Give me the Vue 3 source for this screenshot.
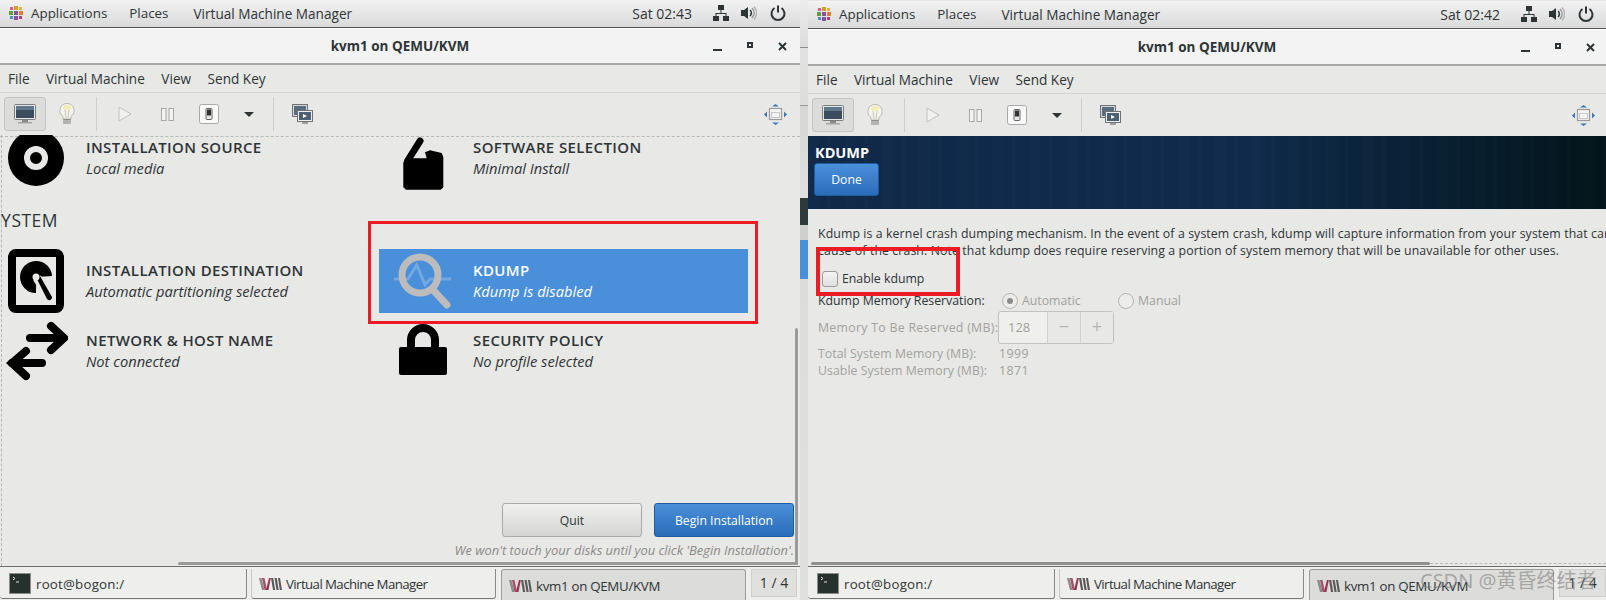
<script setup>
const screens = [
  { id: 'left', time: 'Sat 02:43', hub: true },
  { id: 'right', time: 'Sat 02:42', hub: false }
]
const menus = ['File', 'Virtual Machine', 'View', 'Send Key']
const leftSpokes = [
  { title: 'INSTALLATION DESTINATION', sub: 'Automatic partitioning selected' },
  { title: 'NETWORK & HOST NAME', sub: 'Not connected' }
]
</script>

<template>
  <div class="page">
    <template v-for="(s, i) in screens" :key="s.id">
      <div v-if="i === 1" class="gutter"></div>
      <section class="screen" :class="s.id">
        <header class="topbar">
          <svg class="logo" width="14" height="14" viewBox="0 0 14 14">
            <rect x="5" y="0" width="4" height="4" fill="#c9a227" />
            <rect x="0" y="5" width="4" height="4" fill="#5f9f3a" />
            <rect x="5" y="5" width="4" height="4" fill="#8a4f9e" />
            <rect x="10" y="5" width="4" height="4" fill="#d9822b" />
            <rect x="5" y="10" width="4" height="4" fill="#8a4f9e" />
            <rect x="1" y="1" width="3" height="3" fill="#d95b9a" />
            <rect x="10" y="1" width="3" height="3" fill="#e3b341" />
            <rect x="1" y="10" width="3" height="3" fill="#4d8fc4" />
            <rect x="10" y="10" width="3" height="3" fill="#b0417f" />
          </svg>
          <span class="app-menu applications">Applications</span>
          <span class="app-menu places">Places</span>
          <span class="app-menu vmm">Virtual Machine Manager</span>
          <span class="clock">{{ s.time }}</span>
          <svg class="tray net" width="16" height="16" viewBox="0 0 16 16" fill="#2e3436">
            <rect x="5" y="0" width="6" height="5" />
            <rect x="0" y="11" width="6" height="5" />
            <rect x="10" y="11" width="6" height="5" />
            <path d="M7.5 5h1v3H13.5v3h-1V9h-9v2h-1V8h5z" />
          </svg>
          <svg class="tray vol" width="16" height="16" viewBox="0 0 16 16">
            <path d="M0 5h3l4-3v12l-4-3H0z" fill="#2e3436" />
            <path d="M9 5a4 4 0 0 1 0 6" stroke="#2e3436" stroke-width="1.5" fill="none" />
            <path d="M11 3a7 7 0 0 1 0 10" stroke="#9a9a9a" stroke-width="1.5" fill="none" />
            <path d="M13 1.5a9.500 9.500 0 0 1 0 13" stroke="#b5b5b5" stroke-width="1.4" fill="none" />
          </svg>
          <svg class="tray power" width="16" height="16" viewBox="0 0 16 16" fill="none" stroke="#2e3436" stroke-width="2">
            <path d="M8 0.500v7" />
            <path d="M4.500 3a6.500 6.500 0 1 0 7 0" />
          </svg>
        </header>

        <div class="titlebar">
          <span class="wintitle">kvm1 on QEMU/KVM</span>
          <span class="winctl min"></span>
          <span class="winctl max"></span>
          <svg class="winctl close" width="9" height="9" viewBox="0 0 9 9" stroke="#2e3436" stroke-width="2">
            <path d="M1 1l7 7M8 1l-7 7" />
          </svg>
        </div>

        <nav class="menubar">
          <span v-for="m in menus" :key="m" class="menuitem">{{ m }}</span>
        </nav>

        <div class="toolbar">
          <button class="tool active">
            <svg width="22" height="20" viewBox="0 0 22 20">
              <rect x="0.500" y="0.500" width="21" height="15" rx="1" fill="#e4e6e8" stroke="#7c7f80" />
              <rect x="2" y="2" width="18" height="12" fill="#3a4c5e" />
              <path d="M2 2h18v4H2z" fill="#63778a" />
              <rect x="8" y="16" width="6" height="2" fill="#888" />
              <rect x="4" y="18" width="14" height="1.500" fill="#a5a5a5" />
            </svg>
          </button>
          <button class="tool">
            <svg width="16" height="22" viewBox="0 0 16 22">
              <path d="M8 .5a7 7 0 0 0-4 12.800V16h8v-2.700A7 7 0 0 0 8 .5z" fill="#f4f4ee" stroke="#b8b8b0" />
              <ellipse cx="8" cy="4.500" rx="4" ry="2.500" fill="#eeeeb0" />
              <path d="M6 7l1 8M10 7l-1 8" stroke="#c4c4bc" fill="none" />
              <rect x="4" y="16" width="8" height="5" rx="1" fill="#8e8e8e" />
              <path d="M4 18h8M4 20h8" stroke="#d8d8d8" />
            </svg>
          </button>
          <span class="sep"></span>
          <button class="tool">
            <svg width="14" height="16" viewBox="0 0 14 16"><path d="M1 1l12 7-12 7z" fill="#f0f0ee" stroke="#c2c2c0" /></svg>
          </button>
          <button class="tool">
            <svg width="13" height="13" viewBox="0 0 13 13">
              <rect x=".5" y=".5" width="4.500" height="12" fill="#f2f2f0" stroke="#a8a8a6" />
              <rect x="8" y=".5" width="4.500" height="12" fill="#f2f2f0" stroke="#a8a8a6" />
            </svg>
          </button>
          <button class="tool">
            <svg width="20" height="20" viewBox="0 0 20 20">
              <rect x=".5" y=".5" width="19" height="19" rx="2" fill="#fafafa" stroke="#a9a9a9" />
              <rect x="7" y="4.500" width="6" height="11" rx="1" fill="#e8e8e8" stroke="#666" />
              <rect x="8" y="5.500" width="4" height="6" fill="#333" />
            </svg>
          </button>
          <button class="tool caret"><span class="caret-shape"></span></button>
          <span class="sep sep2"></span>
          <button class="tool">
            <svg width="21" height="21" viewBox="0 0 21 21">
              <rect x=".5" y=".5" width="15" height="12" fill="#d8dadc" stroke="#6f7275" />
              <rect x="2" y="2" width="12" height="9" fill="#596b7d" />
              <rect x="5.500" y="6.500" width="15" height="11" fill="#eceef0" stroke="#6f7275" />
              <rect x="7" y="8" width="12" height="8" fill="#4d6073" />
              <path d="M11 10l4 2-4 2z" fill="#fff" />
              <rect x="10" y="18" width="6" height="2" fill="#a0a0a0" />
            </svg>
          </button>
          <button class="tool fit">
            <svg width="23" height="21" viewBox="0 0 23 21">
              <g fill="#3f74b5">
                <path d="M11.500 0l3.500 2.500h-7z" />
                <path d="M11.500 21l3.500-2.500h-7z" />
                <path d="M0 10.500l3-3v6z" />
                <path d="M23 10.500l-3-3v6z" />
              </g>
              <rect x="5.500" y="4.500" width="12" height="11" fill="#f4f4f4" stroke="#9a9a9a" stroke-width="1.200" />
              <rect x="7.500" y="8.500" width="8" height="5" fill="none" stroke="#c8c8c8" />
            </svg>
          </button>
        </div>

        <main v-if="s.hub" class="hub">
          <div class="spokes">
            <div class="col">
              <div class="spoke first">
                <span class="sp-icon">
                  <svg width="64" height="64" viewBox="0 0 64 64">
                    <circle cx="32" cy="32" r="28" fill="#000" />
                    <circle cx="32" cy="32" r="9" fill="none" stroke="#e8e8e6" stroke-width="6" />
                  </svg>
                </span>
                <div class="sp-text"><div class="sp-title">INSTALLATION SOURCE</div><div class="sp-sub">Local media</div></div>
              </div>
              <h2 class="category">SYSTEM</h2>
              <div v-for="(sp, n) in leftSpokes" :key="sp.title" class="spoke" :class="{ lower: n === 1 }">
                <span class="sp-icon">
                  <svg v-if="n === 0" width="64" height="64" viewBox="0 0 64 64">
                    <rect x="8" y="4" width="48" height="56" rx="4" fill="none" stroke="#000" stroke-width="8" />
                    <path d="M32 28L48 27A16 16 0 1 0 32 44Z" fill="#000" />
                    <path d="M33 29L47 50" stroke="#e8e8e6" stroke-width="9" />
                    <path d="M32 28L36 27 48 48A2.800 2.800 0 0 1 43 50Z" fill="#000" />
                    <circle cx="32" cy="28" r="3.500" fill="#e8e8e6" />
                  </svg>
                  <svg v-else width="64" height="64" viewBox="0 0 64 64" fill="none" stroke="#000" stroke-width="8">
                    <path d="M26 19H58" stroke-linecap="round" />
                    <path d="M47 7L60 19 47 31" stroke-linecap="round" />
                    <path d="M38 44H8" stroke-linecap="round" />
                    <path d="M22 32L8 44 22 57" stroke-linecap="round" />
                  </svg>
                </span>
                <div class="sp-text"><div class="sp-title">{{ sp.title }}</div><div class="sp-sub">{{ sp.sub }}</div></div>
              </div>
            </div>
            <div class="col col2">
              <div class="spoke first">
                <span class="sp-icon">
                  <svg width="64" height="66" viewBox="0 0 64 66">
                    <path d="M15.300 37.300L23.700 33.300H38.700L37 27.300L42 25.300L53.700 28L55.300 32.300V62.300L52.700 64.700H18L15.300 62.300Z" fill="#000" />
                    <path d="M32 16L19.500 36" stroke="#000" stroke-width="7" stroke-linecap="round" />
                  </svg>
                </span>
                <div class="sp-text"><div class="sp-title">SOFTWARE SELECTION</div><div class="sp-sub">Minimal Install</div></div>
              </div>
              <div class="cat-space"></div>
              <div class="spoke selected">
                <span class="sp-icon">
                  <svg width="64" height="64" viewBox="0 0 64 64" fill="none">
                    <path d="M6 30H20L28.700 16 37 35.700 42 30H63" stroke="#73a8e3" stroke-width="3" />
                    <circle cx="32" cy="26" r="18" stroke="#bcbcbc" stroke-width="7" />
                    <path d="M46 42L59 56" stroke="#bcbcbc" stroke-width="7" stroke-linecap="round" />
                  </svg>
                </span>
                <div class="sp-text"><div class="sp-title">KDUMP</div><div class="sp-sub">Kdump is disabled</div></div>
              </div>
              <div class="spoke lower">
                <span class="sp-icon">
                  <svg width="64" height="64" viewBox="0 0 64 64">
                    <path d="M23 30V21a12 12 0 0 1 24 0V30" fill="none" stroke="#000" stroke-width="8" />
                    <rect x="11" y="28" width="48" height="28" rx="2" fill="#000" />
                  </svg>
                </span>
                <div class="sp-text"><div class="sp-title">SECURITY POLICY</div><div class="sp-sub">No profile selected</div></div>
              </div>
            </div>
          </div>
          <div class="actions">
            <button class="btn quit">Quit</button>
            <button class="btn primary begin">Begin Installation</button>
          </div>
          <p class="note">We won't touch your disks until you click 'Begin Installation'.</p>
          <span class="vscroll"></span>
          <span class="hscroll"></span>
        </main>

        <main v-else class="kdump">
          <div class="banner">
            <div class="banner-title">KDUMP</div>
            <button class="btn primary done">Done</button>
          </div>
          <div class="form">
            <p class="line">Kdump is a kernel crash dumping mechanism. In the event of a system crash, kdump will capture information from your system that can</p>
            <p class="line">cause of the crash. Note that kdump does require reserving a portion of system memory that will be unavailable for other uses.</p>
            <label class="check-row"><span class="checkbox"></span>Enable kdump</label>
            <div class="res-row">
              <span class="res-label">Kdump Memory Reservation:</span>
              <span class="radio-opt"><span class="radio on"></span>Automatic</span>
              <span class="radio-opt"><span class="radio"></span>Manual</span>
            </div>
            <div class="spin-row">
              <span class="spin-label">Memory To Be Reserved (MB):</span>
              <div class="spin">
                <span class="spin-val">128</span>
                <span class="spin-btn">−</span>
                <span class="spin-btn">+</span>
              </div>
            </div>
            <div class="stat"><span class="stat-label">Total System Memory (MB):</span><span class="stat-val">1999</span></div>
            <div class="stat"><span class="stat-label">Usable System Memory (MB):</span><span class="stat-val">1871</span></div>
          </div>
          <span class="hscroll2"></span>
        </main>

        <footer class="taskbar">
          <div class="task t1">
            <svg width="22" height="21" viewBox="0 0 22 21">
              <rect x=".5" y=".5" width="21" height="20" fill="#26302c" stroke="#8b8b8b" />
              <path d="M4 4l2 1.500L4 7" stroke="#dfe6e0" fill="none" />
              <path d="M7 9h3" stroke="#dfe6e0" />
            </svg>
            root@bogon:/
          </div>
          <div class="task t2">
            <svg class="vm" width="23" height="12" viewBox="0 0 23 12">
              <path d="M0 0h2.500l3 12H3z" fill="#8a8a8a" />
              <path d="M3 0h2.500l2.500 12H5.500z" fill="#a8506a" />
              <path d="M7 12l3-12h1.800l-2.300 12z" fill="#943350" />
              <path d="M12 0h2.200l2 12H14zM15.500 0h2.200l2 12H17.500zM19 0h2l2 12h-2.200z" fill="#5a5a5a" />
            </svg>
            Virtual Machine Manager
          </div>
          <div class="task t3 active-task">
            <svg class="vm" width="23" height="12" viewBox="0 0 23 12">
              <path d="M0 0h2.500l3 12H3z" fill="#8a8a8a" />
              <path d="M3 0h2.500l2.500 12H5.500z" fill="#a8506a" />
              <path d="M7 12l3-12h1.800l-2.300 12z" fill="#943350" />
              <path d="M12 0h2.200l2 12H14zM15.500 0h2.200l2 12H17.500zM19 0h2l2 12h-2.200z" fill="#5a5a5a" />
            </svg>
            kvm1 on QEMU/KVM
          </div>
          <div class="pager">1 / 4</div>
        </footer>

        <span class="redbox"></span>
      </section>
    </template>
    <span class="watermark">CSDN @黄昏终结者</span>
  </div>
</template>

<style scoped>
.page {
  position: relative;
  display: flex;
  width: 1606px;
  height: 600px;
  overflow: hidden;
  font-family: "Open Sans", "Noto Sans", sans-serif;
  color: #2e3436;
  background: #e8e8e6;
}
.screen {
  position: relative;
  display: flex;
  flex-direction: column;
  flex: none;
  height: 600px;
  background: #e8e8e6;
}
.screen.left { width: 800px; }
.screen.right { width: 798px; padding-top: 1px; box-sizing: border-box; }
.gutter {
  flex: none;
  width: 8px;
  background: linear-gradient(180deg,
    #ececec 0, #dcdcdc 47px, #8d8d8d 47px, #8d8d8d 48px,
    #e2e2e2 48px, #dcdcdc 105px, #999 105px, #999 106px,
    #d6d6d6 106px, #e0e0e0 198px, #2c3a3a 198px, #2c3a3a 225px,
    #cfcfcf 225px, #cfcfcf 240px, #4a8fd9 240px, #4a8fd9 279px,
    #dcdcdc 279px, #e0e0e0 600px);
}
.topbar {
  display: flex;
  align-items: center;
  flex: none;
  height: 28px;
  box-sizing: border-box;
  padding: 0 14px 1px 9px;
  border-bottom: 1px solid #555;
  background: linear-gradient(180deg, #f2f2f2, #dadada);
  font-size: 13.4px;
}
.right .topbar { padding-right: 12px; }
.logo { margin-right: 8px; }
.app-menu { color: #2e3436; }
.applications { margin-right: 22px; }
.places { margin-right: 25px; }
.vmm { font-size: 13.6px; }
.clock { margin-left: auto; margin-right: 21px; font-size: 14px; }
.tray { margin-left: 0; }
.tray.vol { margin-left: 12px; }
.tray.power { margin-left: 13px; }

.titlebar {
  position: relative;
  display: flex;
  align-items: center;
  justify-content: center;
  flex: none;
  height: 37px;
  box-sizing: border-box;
  border-top: 1px solid #fff;
  border-bottom: 2px solid #a8a8a8;
  background: #f3f3f3;
}
.wintitle { font-size: 13.5px; font-weight: 700; color: #2e3436; }
.winctl { position: absolute; }
.min { right: 78px; top: 20px; width: 9px; height: 2px; background: #2e3436; }
.max { right: 47px; top: 13px; width: 2px; height: 2px; border: 2px solid #2e3436; }
.close { right: 13px; top: 13px; }
.right .min { right: 76px; }
.right .max { right: 45px; }
.right .close { right: 11px; }

.menubar {
  display: flex;
  align-items: center;
  gap: 16.500px;
  flex: none;
  height: 28px;
  box-sizing: border-box;
  padding: 0 8px;
  border-bottom: 1px solid #d4d4d2;
  font-size: 13.600px;
}
.toolbar {
  display: flex;
  align-items: center;
  flex: none;
  height: 42px;
  box-sizing: border-box;
  padding: 0 4px;
  background: #e8e8e6;
}
.right .toolbar { padding-right: 2px; }
.tool {
  display: flex;
  align-items: center;
  justify-content: center;
  width: 42px;
  height: 34px;
  padding: 0;
  border: 1px solid transparent;
  border-radius: 3px;
  background: none;
}
.tool.active { border-color: #c4c4c2; background: #dcdcda; }
.tool.caret { width: 38px; }
.caret-shape {
  width: 0;
  height: 0;
  border-left: 5px solid transparent;
  border-right: 5px solid transparent;
  border-top: 5px solid #2e3436;
}
.tool.fit { margin-left: auto; }
.sep { width: 1px; height: 34px; margin: 0 7px 0 8px; background: #d0d0ce; }
.sep2 { margin: 0 7px 0 5px; }

.hub {
  position: relative;
  display: flex;
  flex-direction: column;
  flex: 1;
  min-height: 0;
  overflow: hidden;
}
.hub::before {
  content: "";
  position: absolute;
  left: 0;
  right: 0;
  top: 1px;
  border-top: 1px dashed #b9b9b7;
}
.hub::after {
  content: "";
  position: absolute;
  left: 1px;
  top: 0;
  bottom: 0;
  border-left: 1px dashed #b9b9b7;
}
.spokes {
  position: relative;
  z-index: 1;
  display: flex;
  margin-top: -9px;
}
.col { display: flex; flex-direction: column; flex: none; width: 379px; }
.col2 { width: 369px; }
.spoke { display: flex; align-items: center; height: 64px; }
.spoke.lower { margin-top: 6px; }
.sp-icon { display: flex; flex: none; width: 86px; padding-left: 4px; box-sizing: border-box; }
.col2 .sp-icon { width: 94px; padding-left: 9px; }
.sp-title { font-size: 15px; font-weight: 600; letter-spacing: .38px; line-height: 20px; color: #2e3436; white-space: nowrap; }
.sp-sub { font-size: 14.700px; font-style: italic; line-height: 22px; color: #2e3436; white-space: nowrap; }
.category {
  height: 59px;
  margin: 0 0 0 -9px;
  font-size: 17.500px;
  font-weight: 400;
  line-height: 61px;
  letter-spacing: .5px;
}
.cat-space { height: 59px; }
.selected { background: #4a8fd9; color: #fff; }
.selected .sp-title, .selected .sp-sub { color: #fff; }

.actions {
  position: relative;
  z-index: 1;
  display: flex;
  justify-content: flex-end;
  gap: 12px;
  margin-top: auto;
  padding-right: 6px;
}
.btn {
  font-family: inherit;
  font-size: 12.200px;
  border-radius: 3px;
  padding: 0;
}
.quit {
  width: 140px;
  height: 34px;
  border: 1px solid #a9a9a7;
  background: linear-gradient(180deg, #f0f0ee, #d4d4d2);
  color: #2e3436;
}
.primary {
  border: 1px solid #1d5a9e;
  background: linear-gradient(180deg, #4a90d9, #2a6cb8);
  color: #fff;
}
.begin { width: 140px; height: 34px; }
.note {
  position: relative;
  z-index: 1;
  height: 17px;
  margin: 5px 6px 7px 0;
  font-size: 12.900px;
  font-style: italic;
  line-height: 17px;
  text-align: right;
  white-space: nowrap;
  color: #8b8b89;
}
.vscroll {
  position: absolute;
  z-index: 2;
  right: 2px;
  top: 193px;
  bottom: 1px;
  width: 3px;
  border-radius: 2px;
  background: #9a9c9c;
}
.hscroll {
  position: absolute;
  z-index: 2;
  left: 178px;
  right: 2px;
  bottom: 1px;
  height: 3px;
  border-radius: 2px;
  background: #9a9c9c;
}

.kdump {
  position: relative;
  display: flex;
  flex-direction: column;
  flex: 1;
  min-height: 0;
}
.banner {
  flex: none;
  height: 73px;
  box-sizing: border-box;
  padding: 8px 6px 0;
  background:
    repeating-linear-gradient(90deg, rgba(255,255,255,.006) 0 11px, rgba(0,0,0,.012) 11px 19px, rgba(255,255,255,.01) 19px 23px, rgba(0,0,0,.008) 23px 37px),
    linear-gradient(90deg, #10294a 0, #0f2a4c 55%, #082033 78%, #03141a 100%);
  color: #fff;
}
.banner-title { height: 18px; margin-left: 1px; font-size: 14.500px; font-weight: 700; line-height: 18px; }
.done { display: block; width: 65px; height: 33px; margin-top: 1px; }
.form { padding: 16px 0 0 10px; font-size: 12.300px; overflow: hidden; }
.line { height: 17px; margin: 0; line-height: 17px; letter-spacing: .105px; white-space: nowrap; }
.check-row { display: flex; align-items: center; height: 17px; margin-top: 11px; padding-left: 4px; }
.checkbox {
  flex: none;
  width: 14px;
  height: 14px;
  margin-right: 4px;
  border: 1px solid #9a9a98;
  border-radius: 3px;
  background: linear-gradient(180deg, #f4f4f2, #e0e0de);
}
.res-row { display: flex; align-items: center; height: 17px; margin-top: 5px; }
.res-label { flex: none; width: 184px; }
.radio-opt { display: flex; align-items: center; gap: 4px; flex: none; width: 116px; color: #a2a29f; }
.radio {
  display: flex;
  align-items: center;
  justify-content: center;
  flex: none;
  width: 14px;
  height: 14px;
  border: 1px solid #b6b6b4;
  border-radius: 50%;
  background: #ececea;
}
.radio.on::after { content: ""; width: 6px; height: 6px; border-radius: 50%; background: #8c8c8a; }
.spin-row { display: flex; align-items: center; height: 33px; margin-top: 2px; color: #a2a29f; }
.spin-label { flex: none; width: 180px; letter-spacing: .3px; white-space: nowrap; }
.spin {
  display: flex;
  flex: none;
  width: 116px;
  height: 33px;
  box-sizing: border-box;
  border: 1px solid #c2c2c0;
  border-radius: 3px;
  background: #efefed;
}
.spin-val { flex: none; width: 48px; padding-left: 9px; box-sizing: border-box; line-height: 31px; font-size: 13px; }
.spin-btn {
  flex: 1;
  border-left: 1px solid #d2d2d0;
  background: #e8e8e6;
  color: #b6b6b4;
  font-size: 18px;
  line-height: 29px;
  text-align: center;
}
.stat { display: flex; height: 17px; line-height: 17px; color: #a2a29f; }
.spin-row + .stat { margin-top: 1px; }
.stat-label { flex: none; width: 181px; letter-spacing: .05px; white-space: nowrap; }
.stat-val { letter-spacing: .5px; }
.hscroll2 {
  position: absolute;
  left: 3px;
  bottom: 1px;
  width: 619px;
  height: 3px;
  border-radius: 2px;
  background: #8f9191;
}
.hscroll2::after {
  content: "";
  position: absolute;
  left: 619px;
  top: 1px;
  width: 176px;
  border-top: 1px dashed #b9b9b7;
}

.taskbar {
  display: flex;
  flex: none;
  height: 34px;
  box-sizing: border-box;
  padding-top: 2px;
  border-top: 1px solid #6f6f6f;
  background: #eeeeec;
  font-size: 13.300px;
}
.task {
  display: flex;
  align-items: center;
  flex: none;
  height: 30px;
  box-sizing: border-box;
  border: 1px solid #c8c8c6;
  border-top: 0;
  border-bottom: 1px solid #777;
  border-right: 1px solid #8a8a88;
  border-radius: 0 0 3px 3px;
  background: #eeeeec;
  white-space: nowrap;
}
.t1 { width: 247px; padding-left: 9px; gap: 5px; border-left: 0; letter-spacing: .2px; }
.t2 { width: 245px; margin-left: 4px; padding-left: 7px; gap: 4px; letter-spacing: -.6px; }
.t3 { width: 245px; margin-left: 5px; padding-left: 7px; gap: 4px; letter-spacing: -.3px; }
.active-task { height: 32px; border: 1px solid #9a9a98; border-bottom: 0; background: #dcdcda; border-radius: 3px 3px 0 0; }
.pager {
  flex: none;
  width: 46px;
  height: 28px;
  box-sizing: border-box;
  margin-left: 5px;
  border: 1px solid #d0d0ce;
  background: #e0e0de;
  line-height: 26px;
  text-align: center;
  font-size: 14px;
}
.right .pager { width: 47px; }

.redbox { position: absolute; z-index: 5; box-sizing: border-box; border: 3px solid #ed1c24; }
.left .redbox { left: 368px; top: 221px; width: 390px; height: 103px; }
.right .redbox { left: 8px; top: 247px; width: 144px; height: 49px; border-width: 4px; }

.watermark {
  position: absolute;
  z-index: 6;
  left: 1420px;
  top: 565px;
  font-family: "Noto Sans", "Noto Sans CJK SC", sans-serif;
  font-size: 20px;
  color: rgba(120, 120, 120, .55);
  white-space: nowrap;
}
</style>
